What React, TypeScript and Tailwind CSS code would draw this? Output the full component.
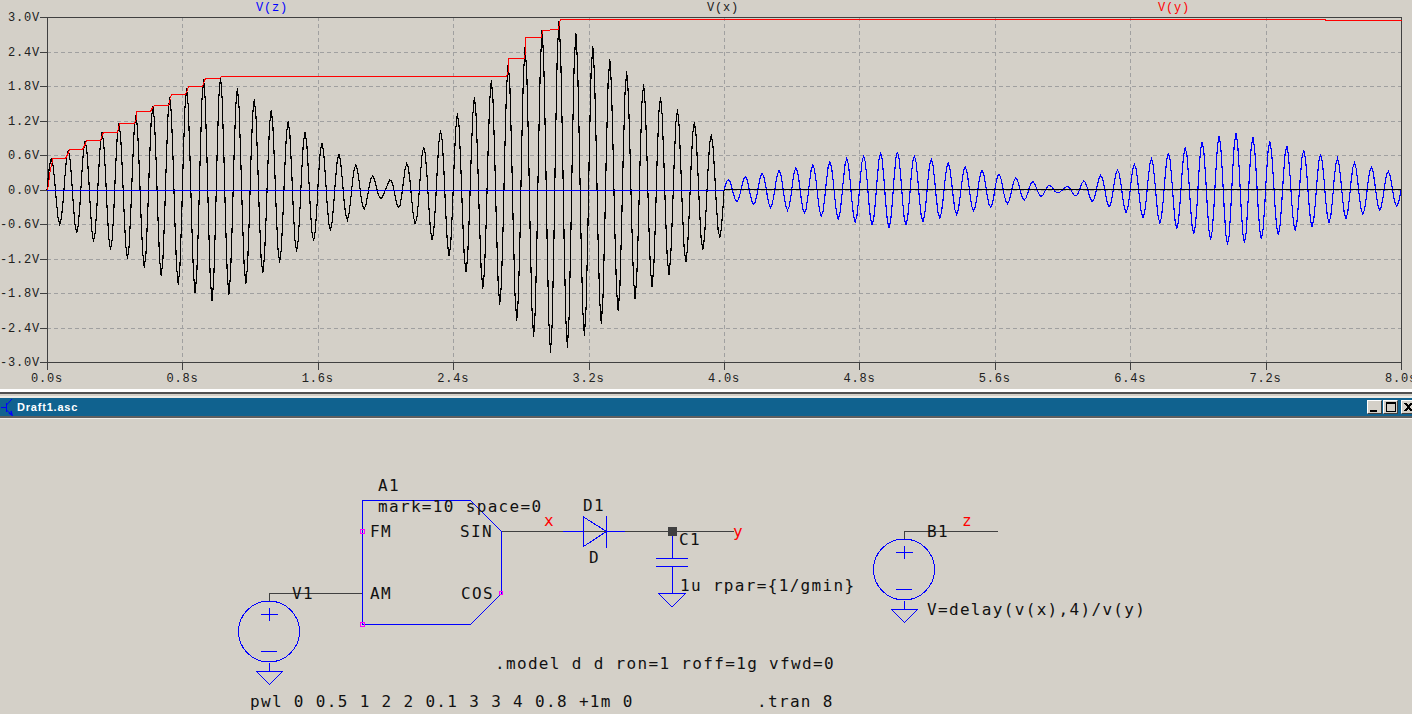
import React from "react";

const X0 = 47;
const PX_S = 169.25;
const Y0 = 190;
const PX_V = 57.5;
const px = (t: number) => X0 + PX_S * t;
const py = (v: number) => Y0 - PX_V * v;

const ENV: [number, number][] = [[0, 0.5], [0.925, 1.93], [1, 2.02], [2, 0.1], [3, 3], [4, 0.8]];
function env(t: number) {
  for (let i = 0; i < ENV.length - 1; i++) {
    const [a, av] = ENV[i];
    const [b, bv] = ENV[i + 1];
    if (t >= a && t <= b) return av + ((t - a) / (b - a)) * (bv - av);
  }
  return 0;
}
const x = (t: number) => {
  if (t >= 4) return 0;
  const v = env(t) * Math.sin(2 * Math.PI * 10 * t);
  return v < 0 ? v * 0.97 : v;
};

function wave(t0: number, t1: number, f: (t: number) => number) {
  const pts: string[] = [`${px(t0).toFixed(1)},${py(f(t0)).toFixed(1)}`];
  const step = 0.01;
  const n = Math.round((t1 - t0) / step);
  for (let i = 0; i < n; i++) {
    const t = t0 + 0.005 + i * step;
    pts.push(`${px(t).toFixed(1)},${py(f(t)).toFixed(1)}`);
  }
  pts.push(`${px(t1).toFixed(1)},${py(f(t1)).toFixed(1)}`);
  return pts.join(" ");
}

const xPts = wave(0, 4, x);
const zPts = wave(4, 8, (t) => x(t - 4) / 2.97);

const RED =
  "47,190 48,183 50,168 52,161 52,158 65,158 68,152 69,149 82,149 85,143 86,140 100,140 102,134 103,132 117,132 118,128 119,123 134,123 136,118 136,111 150,111 152,107 154,105 168,105 170,98 171,94 185,94 187,89 188,86 202,86 204,80 205,78 219,78 221,76 506,76 508,70 508,58 524,58 525,51 525,37 541,37 542,30 558,29 559,22 560,19 1325,19 1325,20 1401,20";

const VLINES = [1, 2, 3, 4, 5, 6, 7, 8, 9].map((i) => Math.round(47 + 135.4 * i));
const HVALS = ["3.0V", "2.4V", "1.8V", "1.2V", "0.6V", "0.0V", "-0.6V", "-1.2V", "-1.8V", "-2.4V", "-3.0V"];
const HY = [17, 52, 86, 121, 155, 190, 224, 259, 293, 328, 362];
const TVALS = ["0.0s", "0.8s", "1.6s", "2.4s", "3.2s", "4.0s", "4.8s", "5.6s", "6.4s", "7.2s", "8.0s"];

const labelFont = {
  fontFamily: '"Liberation Mono", monospace',
  fontSize: 12,
  letterSpacing: 0.8,
};
const schFont = {
  fontFamily: '"DejaVu Sans Mono", monospace',
  fontSize: 16,
  letterSpacing: 1.33,
};

function Plot() {
  return (
    <svg width="1412" height="389" viewBox="0 0 1412 389" className="block" shapeRendering="crispEdges">
      {VLINES.map((v) => (
        <line key={v} x1={v + 0.5} x2={v + 0.5} y1="17" y2="362" stroke="#a0a0a0" strokeDasharray="4 3" />
      ))}
      {HY.slice(1, -1).map((y) => (
        <line key={y} x1="47" x2="1401" y1={y + 0.5} y2={y + 0.5} stroke="#a0a0a0" strokeDasharray="4 3" />
      ))}
      {HY.map((y) => (
        <line key={y} x1="40" x2="47" y1={y + 0.5} y2={y + 0.5} stroke="#404040" />
      ))}
      {[0, ...VLINES, 1401].map((v, i) => (
        <line key={i} x1={(i === 0 ? 47 : v) + 0.5} x2={(i === 0 ? 47 : v) + 0.5} y1="362" y2="370" stroke="#404040" />
      ))}
      <rect x="47.5" y="17.5" width="1354" height="345" fill="none" stroke="#404040" />
      <polyline points={xPts} fill="none" stroke="#000" strokeWidth="1.15" />
      <polyline points={zPts} fill="none" stroke="#0000ff" strokeWidth="1.15" />
      <line x1="47" x2="724" y1="190.5" y2="190.5" stroke="#0000ff" />
      <line x1="724" x2="1401" y1="189.5" y2="189.5" stroke="#000" />
      <polyline points={RED} fill="none" stroke="#ff0000" transform="translate(0.5 0.5)" />
      {HVALS.map((s, i) => (
        <text key={s} x={40} y={HY[i] + 4} textAnchor="end" fill="#202020" style={labelFont}>
          {s}
        </text>
      ))}
      {TVALS.map((s, i) => (
        <text key={s} x={47 + 135.4 * i} y={382} textAnchor="middle" fill="#202020" style={labelFont}>
          {s}
        </text>
      ))}
      <text x="256" y="11" fill="#0000ff" style={labelFont}>V(z)</text>
      <text x="707" y="11" fill="#202020" style={labelFont}>V(x)</text>
      <text x="1158" y="11" fill="#ff0000" style={labelFont}>V(y)</text>
    </svg>
  );
}

function Source({ cx, cy }: { cx: number; cy: number }) {
  return (
    <g fill="none" stroke="#0000ff" shapeRendering="crispEdges">
      <circle cx={cx} cy={cy} r="30.5" />
      <path d={`M${cx - 8} ${cy - 17.5}H${cx + 9}M${cx + 0.5} ${cy - 24}V${cy - 11}M${cx - 8} ${cy + 20}H${cx + 8}M${cx + 0.5} ${cy + 31}V${cy + 39}`} />
      <path d={`M${cx - 13} ${cy + 39.5}H${cx + 14}L${cx + 0.5} ${cy + 53}Z`} />
    </g>
  );
}

function T({ x, y, c = "#111", children }: { x: number; y: number; c?: string; children: React.ReactNode }) {
  return (
    <text x={x} y={y} fill={c} style={schFont}>
      {children}
    </text>
  );
}

function Schematic() {
  return (
    <svg width="1412" height="295" viewBox="0 419 1412 295" className="block">
      <g fill="none" stroke="#404040" shapeRendering="crispEdges">
        <path d="M269.5 601V593.5H362M501 531.5H734M904.5 539V531.5H998" />
      </g>
      <path d="M362.5 500.5H470.5L501.5 531.5V593.5L470.5 624.5H362.5Z" fill="none" stroke="#0000ff" shapeRendering="crispEdges" />
      <g fill="none" stroke="#ff00ff" shapeRendering="crispEdges">
        <rect x="360.5" y="529.5" width="4" height="4" />
        <rect x="360.5" y="622.5" width="4" height="4" />
        <rect x="499.5" y="591.5" width="3" height="3" />
      </g>
      <Source cx={269} cy={631.5} />
      <Source cx={904} cy={569.5} />
      <g fill="none" stroke="#0000ff" shapeRendering="crispEdges">
        <path d="M563 531.5H583M583.5 517V546.5L606.5 531.5ZM606.5 516V548M607 531.5H625" />
        <path d="M672.5 536V558.5M656 558.5H688M656 566.5H688M672.5 566.5V593.5M658.5 593.5H685.5L672 607Z" />
      </g>
      <rect x="668" y="527" width="9" height="9" fill="#404040" />
      <T x={378} y={491}>A1</T>
      <T x={378} y={512}>mark=10 space=0</T>
      <T x={370} y={537}>FM</T>
      <T x={460} y={537}>SIN</T>
      <T x={370} y={599}>AM</T>
      <T x={461} y={599}>COS</T>
      <T x={292} y={599}>V1</T>
      <T x={250} y={707}>pwl 0 0.5 1 2 2 0.1 3 3 4 0.8 +1m 0</T>
      <T x={583} y={511}>D1</T>
      <T x={589} y={563}>D</T>
      <T x={679} y={545}>C1</T>
      <T x={680} y={591}>1u rpar={"{1/gmin}"}</T>
      <T x={495} y={669}>.model d d ron=1 roff=1g vfwd=0</T>
      <T x={757} y={707}>.tran 8</T>
      <T x={927} y={537}>B1</T>
      <T x={927} y={615}>V=delay(v(x),4)/v(y)</T>
      <T x={544} y={526} c="#ff0000">x</T>
      <T x={733} y={537} c="#ff0000">y</T>
      <T x={962} y={526} c="#ff0000">z</T>
    </svg>
  );
}

function WinButton({ children }: { children: React.ReactNode }) {
  return (
    <div className="flex h-[14px] w-[15px] shrink-0 items-center justify-center border-t border-l border-t-white border-l-white border-r border-b border-r-[#404040] border-b-[#404040] bg-[#d4d0c8]">
      {children}
    </div>
  );
}

function TitleBar() {
  return (
    <div className="flex h-[18px] items-center overflow-hidden bg-[#10628f]">
      <svg width="13" height="18" viewBox="0 0 13 18" className="ml-px shrink-0" fill="none" stroke="#0000ff">
        <path d="M0 9.5H5M5.5 5V14M5.5 7L11 1M5.5 12L11 17" />
        <path d="M8 15L11 17L10 13" strokeWidth="1.5" />
      </svg>
      <span className="ml-[3px] text-[11px] font-bold tracking-[0.8px] text-white [font-family:'Liberation_Sans',sans-serif]">Draft1.asc</span>
      <div className="ml-auto flex items-center">
        <WinButton>
          <div className="mt-[7px] mr-[3px] h-[2px] w-[7px] bg-black" />
        </WinButton>
        <div className="ml-px">
          <WinButton>
            <div className="h-[10px] w-[10px] border border-t-2 border-black" />
          </WinButton>
        </div>
        <div className="ml-[3px] mr-[-4px]">
          <WinButton>
            <svg width="9" height="8" viewBox="0 0 9 8" stroke="#000" strokeWidth="2" shapeRendering="crispEdges">
              <path d="M1 0L8 8M8 0L1 8" />
            </svg>
          </WinButton>
        </div>
      </div>
    </div>
  );
}

export default function App() {
  return (
    <div className="flex h-[714px] w-[1412px] flex-col overflow-hidden bg-[#d4d0c8]">
      <Plot />
      <div className="h-[3px] shrink-0 bg-white" />
      <div className="h-[2px] shrink-0 bg-[#505050]" />
      <div className="h-[2px] shrink-0" />
      <div className="h-[2px] shrink-0 bg-[#eeece6]" />
      <TitleBar />
      <div className="h-[2px] shrink-0 bg-[#606060]" />
      <div className="h-px shrink-0 bg-[#f0efea]" />
      <Schematic />
    </div>
  );
}
